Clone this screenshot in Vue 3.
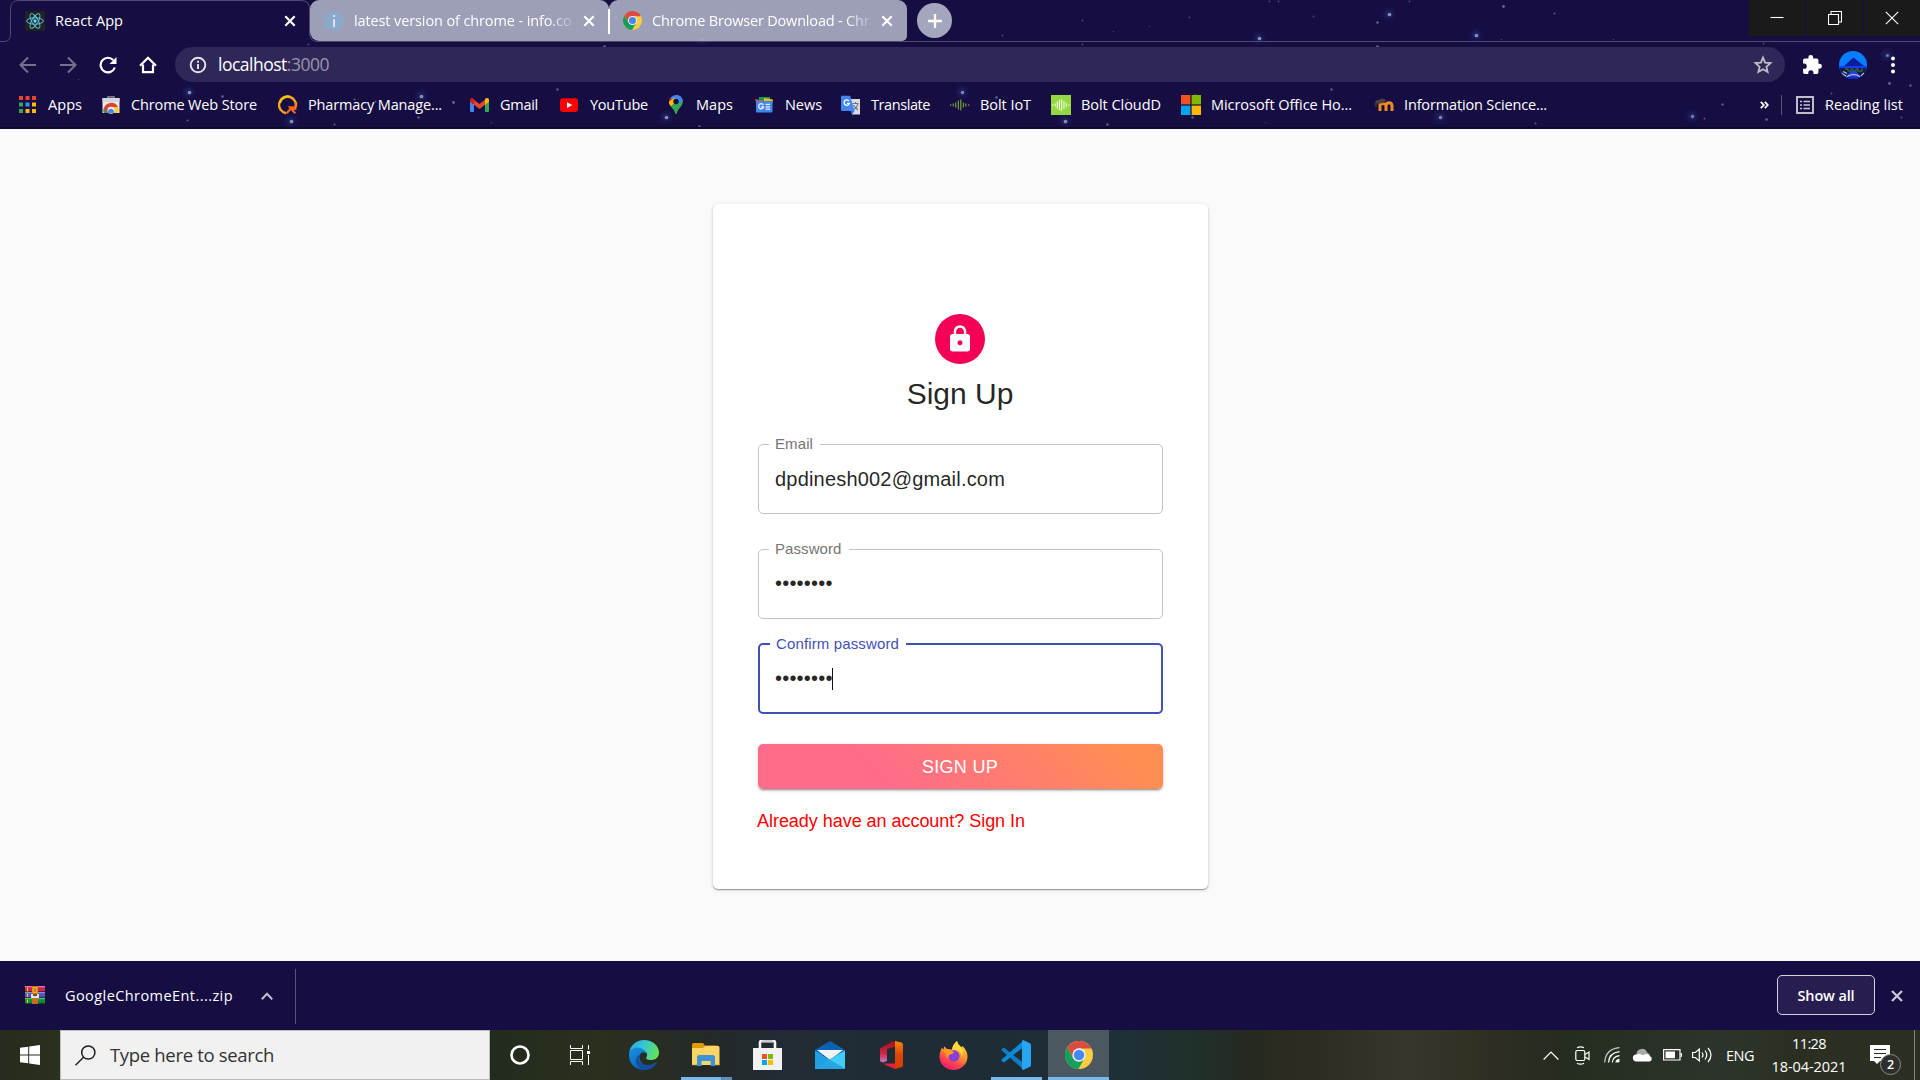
<script setup>
// Sets letter-spacing so that a label takes exactly the given width in pixels.
const vFit = {
  mounted(el, { value }) {
    const natural = el.getBoundingClientRect().width
    const count = el.textContent.length
    el.style.letterSpacing = (value - natural) / count + 'px'
  },
}

const chrome =
  '<circle cx="12" cy="12" r="12" fill="#fdcd40"/><path d="M2 5.4 7.24 14.75 12 12l4.76 2.75L11.5 24A12 12 0 0 1 2 5.4Z" fill="#169f5c"/><path d="M2 5.4A12 12 0 0 1 22.7 6.5H12V12l-4.76 2.75Z" fill="#dc4b3f"/><circle cx="12" cy="12" r="5.7" fill="#f4f4f4"/><circle cx="12" cy="12" r="4.5" fill="#4587f4"/>'

const icons = {
  chrome,
  apps:
    '<path fill="#ea4335" d="M1 1h4v4H1zM7.5 1h4v4h-4zM14 1h4v4h-4z"/><path fill="#34a853" d="M1 7.5h4v4H1z"/><path fill="#3b8cf5" d="M7.5 7.5h4v4h-4z"/><path fill="#fbbc05" d="M14 7.5h4v4h-4zM14 14h4v4h-4z"/><path fill="#34a853" d="M1 14h4v4H1z"/><path fill="#fbbc05" d="M7.5 14h4v4h-4z"/>',
  store:
    '<path d="M7 4V1.8h6V4" fill="none" stroke="#9ba0b5" stroke-width="1.3"/><path d="M1.500 3h17v15h-17z" fill="#e9eaec"/><path d="M1.500 3h17v4h-17z" fill="#d4d5da"/><path d="M2.700 14.500a7.600 7.600 0 0 1 14.300-2.500h-7L6.500 18H3a8 8 0 0 1-.3-3.500Z" fill="#dc4335"/><path d="M2.700 13 6.500 18H3a7 7 0 0 1-.3-5Z" fill="#22a35a"/><path d="M10.500 12H17a7 7 0 0 1 .3 6h-5z" fill="#fbcb3d"/><circle cx="10" cy="15.200" r="3.500" fill="#f4f4f4"/><path d="M7.400 18a2.900 2.900 0 1 1 5.200 0z" fill="#4285f4"/>',
  pharmacy:
    '<path d="M8 18.2A8.400 8.400 0 1 1 17.600 12" fill="none" stroke="#fba51d" stroke-width="2.400"/><path d="M1.800 8A8.400 8.400 0 0 1 12 1.900" fill="none" stroke="#ffc40d" stroke-width="2.400"/><path d="M17.800 7a8.400 8.400 0 0 1-1.300 7" stroke="#f58020" stroke-width="2.400" fill="none"/><path d="M10 11.200h5.500L19 14.500l-3.200.8 2.500 2.700-2 .8-3.500-3.500L9.500 19l-2-1.200 3.800-4z" fill="#f4671e"/>',
  gmail:
    '<path d="M0 4.500 4 7v10H1.200A1.200 1.200 0 0 1 0 15.800z" fill="#4285f4"/><path d="M19 4.500 15 7v10h2.800a1.200 1.200 0 0 0 1.200-1.200z" fill="#34a853"/><path d="M4 4.800 9.500 9 15 4.800v5L9.500 14 4 9.800z" fill="#ea4335"/><path d="M0 5a2 2 0 0 1 3-1.800l1 .8v5.800L0 6.800z" fill="#c5221f"/><path d="M19 5a2 2 0 0 0-3-1.800l-1 .8v5.800l4-3z" fill="#fbbc04"/>',
  youtube:
    '<rect y="3.300" width="18" height="13.600" rx="3" fill="#f00"/><path d="m7 7.200 5.300 2.900L7 13z" fill="#fff"/>',
  maps:
    '<path d="M10 0a7 7 0 0 0-5.500 2.700L8 6l6.800-4A7 7 0 0 0 10 0Z" fill="#4285f4"/><path d="M4.500 2.700A7 7 0 0 0 3.400 9L8 6z" fill="#ea4335"/><path d="m3 6.800c0 2 .8 3.400 1.900 4.800L13 4.800 8 3z" fill="#fbbc04"/><path d="M14.800 2a7 7 0 0 1 1.400 7.600C15 12.500 11.600 14.600 10.700 18.500c-.2.8-1.200.8-1.400 0-.6-2.700-2.500-4.500-4.400-6.900z" fill="#34a853"/><path d="M10 0a7 7 0 0 1 6.800 5.600L12 9z" fill="#4285f4"/><circle cx="10" cy="6.500" r="2.700" fill="#160d40"/>',
  news:
    '<path d="M4 2h11v5H4z" fill="#0c9d58"/><path d="m0 4 12 2v5H2z" fill="#dc4b3f"/><path d="m18 4.500-9-1.500v6h8z" fill="#fbbc04"/><rect x="1" y="6" width="16.500" height="11.500" rx="1" fill="#4285f4"/><path d="M8.300 10A2.500 2.500 0 1 0 8.500 12H6.300M10.500 9.400H15M10.500 11.800H15M10.500 14.200H15" fill="none" stroke="#e8efff" stroke-width="1.300"/>',
  translate:
    '<path d="M8 4h11v15.500h-8z" fill="#dadce0"/><path d="M11.500 8.500h6M14.500 7v1.500M17 8.500c-.5 3-2 4.500-4 6M12.500 10c1 2 2.500 3.500 4.500 5" stroke="#65758a" fill="none" stroke-width="1.100"/><path d="M1.200.8h8L13.500 16H1.200A1.200 1.200 0 0 1 0 14.800V2A1.200 1.200 0 0 1 1.200.8Z" fill="#4285f4"/><path d="m9.500 16 1.500 3.500 2.500-3.500z" fill="#3367d6"/><path d="M8 6a2.700 2.700 0 1 0 .4 2.300H5.800" stroke="#fff" fill="none" stroke-width="1.300"/>',
  bolt:
    '<path d="M.7 9.300v1.400M3.200 8.400v3.200M5.700 7.500v5M8.300 5.500v9M10.800 4.500v11M13.300 7.500v5M15.800 8.400v3.200M18.700 9.300v1.400" stroke="#7cab35" stroke-width="1.100"/>',
  cloud:
    '<path d="M0 0h20v20H0z" fill="#95d83f"/><path d="M1.700 9.300v1.400M4.200 8.400v3.200M6.300 6.500v7M8.500 5v10M10.700 4v12M13 6v8M15.300 8v4M18 9.300v1.400" stroke="#eefbdc" stroke-width="1.100"/>',
  ms:
    '<path d="M0 0h9.400v9.400H0z" fill="#f25022"/><path d="M10.600 0H20v9.400h-9.400z" fill="#7fba00"/><path d="M0 10.600h9.400V20H0z" fill="#00a4ef"/><path d="M10.600 10.600H20V20h-9.400z" fill="#ffb900"/>',
  moodle:
    '<path d="M6 16V8.500M12 16v-5q0-3.200 3-3.200t3 3.200v5" fill="none" stroke="#f08a24" stroke-width="3"/><path d="M7 9.500q2.500-2 5 .5" fill="none" stroke="#f08a24" stroke-width="2.500"/><path d="m1.500 6 6.500-2.500 4.500 1.500-4 3.500c-2-.8-4-.5-5 .5z" fill="#4a4340"/><path d="M2 6v6" stroke="#77504a" stroke-width=".9"/>',
}

// step: distance from this icon to the next one; width: drawn width of the label
const bookmarks = [
  { icon: 'apps', text: 'Apps', width: 34, step: 83 },
  { icon: 'store', text: 'Chrome Web Store', width: 126, step: 177 },
  { icon: 'pharmacy', text: 'Pharmacy Manage...', width: 134, step: 192 },
  { icon: 'gmail', text: 'Gmail', width: 38, step: 90 },
  { icon: 'youtube', text: 'YouTube', width: 58, step: 106 },
  { icon: 'maps', text: 'Maps', width: 37, step: 89 },
  { icon: 'news', text: 'News', width: 37, step: 86 },
  { icon: 'translate', text: 'Translate', width: 59, step: 109 },
  { icon: 'bolt', text: 'Bolt IoT', width: 51, step: 101 },
  { icon: 'cloud', text: 'Bolt CloudD', width: 80, step: 130 },
  { icon: 'ms', text: 'Microsoft Office Ho...', width: 141, step: 193 },
  { icon: 'moodle', text: 'Information Science...', width: 143, step: 180 },
]

// x, y, radius
const stars = [
  [189, 92, 2], [222, 96, 1.4], [354, 99, 1.2], [375, 101, 1.2], [421, 96, 2], [453, 102, 1.5], [418, 117, 1.3],
  [291, 121, 2], [334, 124, 1.2], [187, 120, 1.2], [308, 44, 1], [78, 79, 0.8], [730, 9, 1.2], [763, 10, 1],
  [780, 17, 1], [615, 17, 2], [604, 25, 1.3], [702, 39, 2], [604, 46, 1.4], [557, 89, 1.3], [666, 117, 2],
  [699, 126, 1.3], [491, 122, 0.8], [1269, 1, 1], [1278, 1, 1], [1409, 1, 1], [1082, 20, 1], [1149, 26, 0.8],
  [1113, 31, 0.8], [1002, 35, 1], [1189, 17, 1], [1313, 16, 1], [1377, 22, 1.4], [1389, 14, 2], [1259, 38, 2],
  [1082, 44, 1], [1377, 46, 1.4], [962, 92, 1.9], [996, 97, 1.4], [1331, 89, 1.3], [1065, 121, 2], [1107, 124, 1.3],
  [1192, 117, 1.3], [1127, 99, 1.2], [1195, 95, 1.3], [1295, 105, 1.3], [1265, 122, 0.8], [1440, 117, 1.9],
  [1503, 6, 1.5], [1554, 13, 1.2], [1476, 35, 2], [1501, 39, 0.8], [1613, 39, 0.8], [1763, 43, 1], [1887, 55, 1.7],
  [1889, 83, 1.5], [1910, 85, 1.3], [1831, 93, 1.1], [1722, 104, 1.3], [1692, 116, 1.8], [1704, 118, 1.1],
  [1535, 123, 1.2], [1766, 119, 1.4], [1901, 117, 1.1], [1461, 110, 1.3], [1826, 105, 1.5],
]

const fields = [
  { label: 'Email', labelWidth: 38, value: 'dpdinesh002@gmail.com', width: 230, cls: 'email' },
  { label: 'Password', labelWidth: 66.5, value: '••••••••', width: 57.6, cls: 'password' },
  { label: 'Confirm password', labelWidth: 123, value: '••••••••', width: 57.6, cls: 'confirm', focused: true },
]
</script>

<template>
  <div class="screen">
    <header class="browser">
      <svg class="sky" width="1920" height="127">
        <g v-for="(s, i) in stars" :key="i">
          <circle v-if="s[2] > 1.6" :cx="s[0]" :cy="s[1]" r="7" fill="#2b4ba0" opacity=".1" />
          <circle v-if="s[2] > 1.6" :cx="s[0]" :cy="s[1]" r="4" fill="#4a6ec0" opacity=".12" />
          <circle :cx="s[0] + 0.5" :cy="s[1] + 0.5" :r="s[2] * 0.92" fill="#a9add8" :opacity="s[2] * 0.38" />
        </g>
      </svg>

      <div class="tabs">
        <svg class="tab-line" width="1920" height="42">
          <path d="M0 41.500h4q6.500 0 6.500-7V9q0-8.500 8-8.500h282.500q8.500 0 8.500 8.500v24q0 8.500 8 8.500h1602.500" fill="none" stroke="#51496f" />
        </svg>
        <div class="tab active">
          <svg width="20" height="20" viewBox="0 0 20 20">
            <rect width="20" height="20" rx="1.500" fill="#222" />
            <g fill="none" stroke="#5ed0ee" stroke-width=".9">
              <ellipse cx="10" cy="10" rx="8.300" ry="3.200" />
              <ellipse cx="10" cy="10" rx="8.300" ry="3.200" transform="rotate(60 10 10)" />
              <ellipse cx="10" cy="10" rx="8.300" ry="3.200" transform="rotate(120 10 10)" />
            </g>
            <circle cx="10" cy="10" r="1.700" fill="#61dafb" />
          </svg>
          <div class="title"><span v-fit="68">React App</span></div>
          <svg class="x" width="12" height="12" viewBox="0 0 12 12"><path d="m1.300 1.300 9.400 9.400M10.700 1.300 1.300 10.700" /></svg>
        </div>
        <div class="tab idle first">
          <svg width="20" height="20" viewBox="0 0 20 20">
            <circle cx="10" cy="10" r="10" fill="#8ba9cb" />
            <path d="M9.200 8.200h1.800v8H9.200zM9.200 4h1.800v2H9.200z" fill="#e4e9f2" />
          </svg>
          <div class="title fade"><span v-fit="217.5">latest version of chrome - info.co</span></div>
          <svg class="x" width="12" height="12" viewBox="0 0 12 12"><path d="m1.300 1.300 9.400 9.400M10.700 1.300 1.300 10.700" /></svg>
        </div>
        <div class="tab idle second">
          <svg width="19" height="19" viewBox="0 0 24 24" v-html="icons.chrome"></svg>
          <div class="title fade"><span v-fit="217.5">Chrome Browser Download - Chr</span></div>
          <svg class="x" width="12" height="12" viewBox="0 0 12 12"><path d="m1.300 1.300 9.400 9.400M10.700 1.300 1.300 10.700" /></svg>
        </div>
        <div class="plus">
          <svg width="16" height="16" viewBox="0 0 16 16"><path d="M8 1v14M1 8h14" stroke="#fff" stroke-width="2.300" /></svg>
        </div>
        <div class="controls">
          <div><svg width="14" height="14" viewBox="0 0 14 14"><path d="M.5 6.500h13" /></svg></div>
          <div><svg width="14" height="14" viewBox="0 0 14 14"><path d="M.5 3.500h10v10H.5zM3 3V.5h10.500V11H11" /></svg></div>
          <div><svg width="14" height="14" viewBox="0 0 14 14"><path d="m.8.8 12.400 12.400M13.200.8.8 13.200" /></svg></div>
        </div>
      </div>

      <div class="toolbar">
        <svg class="nav dim" width="18" height="18" viewBox="0 0 18 18"><path d="M17 9H2M9 1.500 1.500 9 9 16.500" /></svg>
        <svg class="nav dim fwd" width="18" height="18" viewBox="0 0 18 18"><path d="M1 9h15M9 1.500 16.500 9 9 16.500" /></svg>
        <svg class="nav reload" width="18" height="18" viewBox="0 0 18 18"><path d="M15.800 11.500A7.300 7.300 0 1 1 14.200 4" /><path d="M17.500 1v7h-7z" fill="#fff" stroke="none" /></svg>
        <svg class="nav home" width="18" height="18" viewBox="0 0 18 18"><path d="M4 8.500v7.700h10V8.500M1 9.800 9 1.800l8 8" /></svg>
        <div class="omnibox">
          <svg width="18" height="18" viewBox="0 0 18 18">
            <circle cx="9" cy="9" r="7.300" fill="none" stroke="#e6e4ee" stroke-width="1.900" />
            <path d="M8.100 8h1.900v5H8.100zM8.100 4.800h1.900v1.900H8.100z" fill="#e6e4ee" />
          </svg>
          <div class="url" v-fit="111">localhost<i>:3000</i></div>
          <svg class="star" width="20" height="20" viewBox="0 0 20 20">
            <path d="m10 2.600 2.100 5.100 5.400.4-4.100 3.600 1.200 5.300L10 14.200l-4.600 2.800 1.200-5.300-4.100-3.600 5.400-.4z" fill="none" stroke="#c1bfc6" stroke-width="1.800" />
          </svg>
        </div>
        <svg class="puzzle" width="20" height="20" viewBox="0 0 24 24">
          <path fill="#fff" d="M21 10.500h-1.300V6.200c0-1.100-.9-2-2-2h-4.300V2.900a2.900 2.900 0 0 0-5.800 0v1.300H3.300c-1.100 0-2 .9-2 2v4.100h1.300a3.100 3.100 0 0 1 0 6.200H1.300v4.200c0 1.100.9 2 2 2h4.200v-1.300a3.100 3.100 0 0 1 6.200 0v1.300h4c1.100 0 2-.9 2-2v-4.300H21a2.950 2.950 0 0 0 0-5.900z" />
        </svg>
        <svg class="avatar-img" width="28" height="28" viewBox="0 0 28 28">
          <clipPath id="face"><circle cx="14" cy="14" r="14" /></clipPath>
          <g clip-path="url(#face)">
            <path fill="#087dff" d="M0 0h28v28H0z" />
            <path fill="#0a3ff0" d="M0 15h28v4H0z" />
            <path fill="#0b1c9e" d="m5 15 9.500-8.500L25 15z" />
            <path fill="#0e1c4e" d="M0 17h28v8H0z" />
            <path d="M6 18h3v2h3v-2h2v2h3v-2h2v2h4v-3" fill="none" stroke="#3f5c3c" stroke-width="1.300" />
            <path fill="#2446d8" d="M12 20h5l6 8H5z" />
            <path d="m2 22 5 3M4 20.500l4 2M8 25.500q7-4 13 0M25 22l-3 3" stroke="#c0c6e6" stroke-width="1.200" fill="none" />
            <path fill="#1222c4" d="M4 26h20v2H4z" />
          </g>
        </svg>
        <svg class="dots" width="6" height="18" viewBox="0 0 6 18" fill="#fff"><circle cx="3" cy="2.500" r="2" /><circle cx="3" cy="9" r="2" /><circle cx="3" cy="15.500" r="2" /></svg>
      </div>

      <div class="bookmarks">
        <div v-for="b in bookmarks" :key="b.text" class="bookmark" :style="{ width: b.step + 'px' }">
          <svg width="20" height="20" viewBox="0 0 20 20" v-html="icons[b.icon]"></svg>
          <span v-fit="b.width">{{ b.text }}</span>
        </div>
        <svg class="more" width="9" height="8" viewBox="0 0 9 8"><path d="m.8.800 3 3.200-3 3.200M4.800.800l3 3.200-3 3.200" fill="none" stroke="#fff" stroke-width="1.700" /></svg>
        <div class="rule"></div>
        <svg class="list" width="18" height="18" viewBox="0 0 18 18" stroke="#c9c7d0" fill="none">
          <rect x="1" y="1" width="16" height="16" stroke-width="1.900" />
          <path d="M4 5.500h2M7.500 5.500H14M4 9h2M7.500 9H14M4 12.500h2M7.500 12.500H14" stroke-width="1.500" />
        </svg>
        <span class="reading" v-fit="78">Reading list</span>
      </div>
    </header>

    <main class="page">
      <section class="card">
        <div class="lock">
          <svg width="30" height="30" viewBox="0 0 24 24"><path fill="#fafafa" d="M18 8h-1V6c0-2.760-2.240-5-5-5S7 3.240 7 6v2H6c-1.100 0-2 .9-2 2v10c0 1.100.9 2 2 2h12c1.100 0 2-.9 2-2V10c0-1.100-.9-2-2-2zm-6 9c-1.100 0-2-.9-2-2s.9-2 2-2 2 .9 2 2-.9 2-2 2zm3.100-9H8.900V6c0-1.710 1.390-3.100 3.100-3.100 1.710 0 3.100 1.390 3.100 3.100v2z" /></svg>
        </div>
        <h1>Sign Up</h1>
        <div v-for="f in fields" :key="f.label" class="field" :class="[f.cls, { focused: f.focused }]">
          <label><span v-fit="f.labelWidth">{{ f.label }}</span></label>
          <span class="value" v-fit="f.width">{{ f.value }}</span>
          <i v-if="f.focused" class="caret"></i>
        </div>
        <button><span v-fit="76">SIGN UP</span></button>
        <a v-fit="268">Already have an account? Sign In</a>
      </section>
    </main>

    <div class="downloads">
      <svg class="rar" width="20" height="18" viewBox="0 0 20 18">
        <path fill="#c52a4c" d="M0 0h20v6H0z" /><path fill="#e875a0" d="M0 0h20v1.300H0z" /><path fill="#7a1030" d="M0 5h20v1H0z" />
        <path fill="#5256b0" d="M0 6h20v6H0z" /><path fill="#8c8fe0" d="M0 6h20v1.200H0z" /><path fill="#2b2d70" d="M0 11h20v1H0z" />
        <path fill="#188a3c" d="M0 12h20v6H0z" /><path fill="#4ec26c" d="M0 12h20v1.200H0z" /><path fill="#0a4f1e" d="M0 16.800h20V18H0z" />
        <path d="M2.500 1.500v4M2.500 7.500v3.500M2.500 13.500V17" stroke="#f2c230" stroke-width="1.200" />
        <path fill="#c2701f" d="M7 0h6v18H7z" /><path fill="#f3b42c" d="M7.500 1h5v6h-5z" /><path d="M7 8v3h6V8" stroke="#eee" stroke-width="1.800" fill="#6d4a2a" /><path d="M8.700 3h2.600M8.700 5h2.600M10 8v2.500" stroke="#8d5414" />
      </svg>
      <span class="file" v-fit="168">GoogleChromeEnt....zip</span>
      <svg class="up" width="12" height="8" viewBox="0 0 12 8"><path d="m.8 7.200 5.200-5.400 5.200 5.400" fill="none" stroke="#c1bfca" stroke-width="2" /></svg>
      <div class="rule"></div>
      <div class="showall"><span v-fit="57">Show all</span></div>
      <svg class="close" width="12" height="12" viewBox="0 0 12 12"><path d="m1 1 10 10M11 1 1 11" stroke="#cbc9d3" stroke-width="2.200" /></svg>
    </div>

    <footer class="taskbar">
      <div class="start">
        <svg width="20" height="20" viewBox="0 0 20 20" fill="#fff"><path d="M0 2.800 8.200 1.700v7.700H0zM9.200 1.500 20 0v9.400H9.200zM0 10.500h8.200v7.800L0 17.200zM9.200 10.500H20V20L9.200 18.500z" /></svg>
      </div>
      <div class="search">
        <svg width="21" height="21" viewBox="0 0 21 21" fill="none" stroke="#1f1f1f" stroke-width="1.500"><circle cx="13.300" cy="7.500" r="6.600" /><path d="M8.500 12.200.5 20.200" /></svg>
        <span v-fit="164">Type here to search</span>
      </div>
      <div class="cell left">
        <svg width="20" height="20" viewBox="0 0 20 20"><circle cx="10" cy="10" r="8.500" fill="none" stroke="#fff" stroke-width="2.600" /></svg>
      </div>
      <div class="cell view">
        <svg width="20" height="20" viewBox="0 0 20 20" fill="none" stroke="#fff"><path d="M.5 0v3.500h12V0M.5 5.500h12v9H.5zM.5 20v-3.500h12V20M18.500 0v4.500M18.500 10v10" /><path d="M17 6h3v3h-3z" fill="#fff" stroke="none" /></svg>
      </div>
      <div class="cell">
        <svg width="30" height="30" viewBox="0 0 30 30">
          <defs>
            <linearGradient id="edgeTop" x1="0" y1=".2" x2="1" y2=".5"><stop offset="0" stop-color="#2ea7ee" /><stop offset=".5" stop-color="#36c9cf" /><stop offset="1" stop-color="#63e258" /></linearGradient>
            <linearGradient id="edgeLow" x1="0" y1="0" x2=".4" y2="1"><stop offset="0" stop-color="#1791e3" /><stop offset="1" stop-color="#0b66c2" /></linearGradient>
          </defs>
          <path d="M.3 12C1.500 5 7.500 0 15 0c8.500 0 15 6 15 12.500 0 4.800-3.500 7.500-7.500 7.500-4.500 0-5.700-1.500-5.300-2.500 1.500-2 1.500-6-2.400-6C9 9.500 3 8.500.3 12Z" fill="url(#edgeTop)" />
          <path d="M.3 12C2 8.500 6 7 10 7.700c4.500.8 7.500 4 7.500 6.500-1-2-3.300-2.800-5.200-1.200-4 3.500-1.500 11 5.700 13l-1.500 4C7 30.500 0 24 0 15.500Z" fill="url(#edgeLow)" />
          <path d="M10.500 14.500C8 20 11.500 25.200 19 25c3.500-.2 6-1.500 7.500-2.800 1-.6 1.500 0 1 .8C25 27.500 20.500 30 15.500 30 9 29 6 24 7 19.500c.5-2.500 1.800-4 3.500-5Z" fill="#124f9c" />
        </svg>
      </div>
      <div class="cell open grouped">
        <svg width="28" height="24" viewBox="0 0 28 24">
          <path d="M0 1.500Q0 0 1.500 0H11l2 2.500h12.500v4H0z" fill="#dc9a03" />
          <path d="M0 5h11l2.500-2H26q1.500 0 1.500 1.500V22H0z" fill="#ffd563" />
          <path d="M5 23v-8.500Q5 12 7.500 12h13q2.500 0 2.500 2.500V23h-4.500v-5h-9v5z" fill="#3c93d8" />
          <path d="M0 21.500h5v.8H0zM23 21.500h4.500v.8H23z" fill="#e5af36" />
        </svg>
      </div>
      <div class="cell left">
        <svg width="29" height="30" viewBox="0 0 29 30">
          <path d="M7 10V2.500Q7 1 8.500 1h12Q22 1 22 2.500V10" fill="none" stroke="#f4f4f4" stroke-width="2.600" /><path d="M9 0h11v2.500H9z" fill="#cbcbcb" />
          <path d="M0 8h29v22H0z" fill="#f1f1f1" />
          <path fill="#f25022" d="M9 14h5v5H9z" /><path fill="#7fba00" d="M15 14h5v5h-5z" /><path fill="#00a4ef" d="M9 20h5v5H9z" /><path fill="#ffb900" d="M15 20h5v5h-5z" />
        </svg>
      </div>
      <div class="cell">
        <svg width="30" height="28" viewBox="0 0 30 28">
          <path d="M0 9 15 0l15 9v5H0z" fill="#0963b5" /><path d="M2 9h26L15 19z" fill="#f2f3f5" /><path d="M0 9.500 30 28H0z" fill="#209fe2" /><path d="M30 9.500V28L14 18.500z" fill="#41cdf7" /><path d="M0 28 14 18.500 30 28z" fill="#28a4e4" />
        </svg>
      </div>
      <div class="cell">
        <svg width="24" height="28" viewBox="0 0 24 28">
          <defs><linearGradient id="officeSide" x1="0" y1="0" x2="0" y2="1"><stop offset="0" stop-color="#a30f12" /><stop offset=".6" stop-color="#c92a49" /><stop offset="1" stop-color="#c979c5" /></linearGradient><linearGradient id="officeFace" x1="0" y1="0" x2="0" y2="1"><stop offset="0" stop-color="#f58a06" /><stop offset=".5" stop-color="#dd4505" /><stop offset="1" stop-color="#d63b02" /></linearGradient></defs>
          <path d="M0 7.500 10 1.500 15.500 0v5.500L7 8v12l-4.500 1.500L0 20z" fill="url(#officeSide)" />
          <path d="M15 0 21.500 1.500Q23 2 23 4v20q0 1.800-1.500 2.200L15 28z" fill="url(#officeFace)" />
          <path d="M3.500 22.500H15V28L5.500 24z" fill="#e5203f" />
        </svg>
      </div>
      <div class="cell left">
        <svg width="29" height="29" viewBox="0 0 29 29">
          <defs><linearGradient id="fox" x1=".8" y1="0" x2=".3" y2="1"><stop offset="0" stop-color="#ffe43c" /><stop offset=".45" stop-color="#ff9130" /><stop offset=".75" stop-color="#ff3f50" /><stop offset="1" stop-color="#ee1a76" /></linearGradient></defs>
          <path d="M3 6.500 4.500 9 5.200 5.200 8 8l5 .5C13.500 5 15 2.500 18 0c.5 3 2.500 4.500 4.500 6.500l1-1.500c3 3 5 6.500 5 10.500A14 13.500 0 0 1 .5 15.500C.5 12 1.500 9 3 6.500Z" fill="url(#fox)" />
          <circle cx="14.800" cy="15" r="5.800" fill="#8a3fd3" />
          <path d="M3 9c3-1.500 6-1.500 9 1l3 1c-.5 1.800-2.500 2-4 2.500-1.200.5-2 2-1.200 4C8 16 7 15 7 13z" fill="#ff9a27" />
          <path d="M18 0c.5 3 2.500 4.500 4.500 6.500 2 2.500 1.500 6 .5 9-.5-4-3-5.500-5-6.500-1.500-.5-3.500-.5-5 0C13.500 5 15 2.500 18 0Z" fill="#ffd83a" />
        </svg>
      </div>
      <div class="cell open">
        <svg width="30" height="30" viewBox="0 0 30 30">
          <path d="M3 7.500 22.500 23v6.500L.7 10.500Q0 9.700.7 9z" fill="#0f7cc4" />
          <path d="M3 22.500 22.500 7V.5L.7 19.500q-.7.700 0 1.500z" fill="#0a8bd8" />
          <path d="M22 0 28.500 3Q30 3.700 30 5v20q0 1.300-1.500 2L22 30l-1-1V1z" fill="#26a5f2" />
        </svg>
      </div>
      <div class="cell open current">
        <svg width="28" height="28" viewBox="0 0 24 24" v-html="icons.chrome"></svg>
      </div>

      <div class="tray">
        <svg width="16" height="9" viewBox="0 0 16 9"><path d="M.6 8.500 8 1l7.400 7.500" /></svg>
        <svg class="cam" width="15" height="19" viewBox="0 0 15 19"><rect x=".8" y="4.500" width="9" height="10" rx="1.500" /><path d="m10 8.500 4-2.500v7.500l-4-2.500M2 1.800q3.500-2 7 0M2 17.200q3.500 2 7 0" /></svg>
        <svg class="wifi" width="16" height="16" viewBox="0 0 16 16"><path d="M.7 15.500Q1.500 2 15.500.7" opacity=".75" /><path d="M4.500 15.500Q5 6 15.500 4.700M8.300 15.500q.5-6 7.200-6.800" /><path d="M12 15.500q.2-2.700 3.500-3.200" /><circle cx="14" cy="14" r="1.600" fill="#fff" stroke="none" /></svg>
        <svg class="drive" width="20" height="14" viewBox="0 0 20 14"><path class="solid" d="M4.500 5.500a5.500 5.500 0 0 1 10.500-1.300L18 7 8 12z" fill="#a9aba8" /><path class="solid" d="M3.700 13.500a3.600 3.600 0 0 1-.2-7q3.500-1.500 7 .8L14 6c3 0 4 1.300 4 2.300a2.700 2.700 0 0 1-.5 5.200z" fill="#fff" /></svg>
        <svg class="battery" width="19" height="12" viewBox="0 0 19 12"><path d="M.6.600h16.400v10.400H.6z" /><path d="M2.500 2.500h9.500v6.700H2.500z" fill="#fff" stroke="none" /><path d="M18.300 4v4" /></svg>
        <svg class="speaker" width="21" height="16" viewBox="0 0 21 16"><path d="M.6 5.500h2.800L7.300 2v12L3.400 10.500H.6zM10 5.500q2 2.500 0 5M13 3.500q3.500 4.500 0 9M16 1q6 7 0 14" /></svg>
        <span class="lang" v-fit="28">ENG</span>
        <div class="clock"><span v-fit="34">11:28</span><span v-fit="75">18-04-2021</span></div>
        <div class="notice">
          <svg width="20" height="20" viewBox="0 0 20 20"><path d="M0 0h20v16H10l-3 3-3-3H0z" fill="#fff" stroke="none" /><path d="M4 4.500h12M4 8.500h12M4 12.500h7" stroke="#222a20" /></svg>
          <b>2</b>
        </div>
        <div class="peek"></div>
      </div>
    </footer>
  </div>
</template>

<style>
html,
body {
  margin: 0;
  overflow: hidden;
}
</style>

<style scoped>
* {
  box-sizing: border-box;
}
.screen {
  width: 1920px;
  height: 1080px;
  display: flex;
  flex-direction: column;
  font-family: "Open Sans", "Noto Sans", sans-serif;
  font-size: 14.5px;
  color: #fff;
}
span,
.url,
a {
  display: inline-block;
  white-space: nowrap;
}
svg {
  display: block;
  flex: none;
}

/* browser frame */
.browser {
  position: relative;
  height: 129px;
  flex: none;
  background: #160d43;
  border-bottom: 2px solid #0e0828;
  display: flex;
  flex-direction: column;
}
.sky {
  position: absolute;
  left: 0;
  top: 0;
}
.tabs {
  position: relative;
  height: 42px;
  display: flex;
  align-items: flex-start;
}
.tab-line {
  position: absolute;
  left: 0;
  top: 0;
}
.tab {
  position: relative;
  height: 41px;
  display: flex;
  align-items: center;
}
.tab.active {
  width: 299px;
  margin-left: 11px;
  padding-left: 14px;
}
.tab.idle {
  background: #a6a8bff0;
}
.tab.first {
  width: 299px;
  padding-left: 14px;
  border-radius: 9px 9px 0 9px;
}
.tab.second {
  width: 298px;
  padding-left: 14px;
  border-radius: 9px 9px 5px 0;
}
.tab.second::before {
  content: "";
  position: absolute;
  left: -1px;
  top: 9px;
  width: 1.5px;
  height: 25px;
  background: #fff;
}
.title {
  margin-left: 10px;
  width: 219px;
}
.title span {
  vertical-align: top;
}
.fade {
  -webkit-mask-image: linear-gradient(90deg, #000 88%, rgba(0, 0, 0, 0.2));
  mask-image: linear-gradient(90deg, #000 88%, rgba(0, 0, 0, 0.2));
}
.x {
  stroke: #fff;
  stroke-width: 2.2;
  margin-left: 10px;
}
.plus {
  width: 35px;
  height: 35px;
  margin: 3px 0 0 10px;
  border-radius: 50%;
  background: #a4a6bd;
  display: flex;
  align-items: center;
  justify-content: center;
}
.controls {
  margin-left: auto;
  display: flex;
  gap: 1px;
}
.controls div {
  width: 56px;
  height: 36px;
  background: #1a1a1a;
  display: flex;
  align-items: center;
  justify-content: center;
}
.controls div:nth-child(2) {
  width: 57px;
}
.controls div:last-child {
  padding-right: 1px;
}
.controls svg {
  fill: none;
  stroke: #fff;
  stroke-width: 1.1;
}

.toolbar {
  position: relative;
  height: 45px;
  display: flex;
  align-items: center;
  padding-left: 19px;
}
.nav {
  fill: none;
  stroke: #fff;
  stroke-width: 2.2;
}
.dim {
  stroke: #77718f;
  stroke-width: 2;
}
.fwd,
.reload,
.home {
  margin-left: 22px;
}
.omnibox {
  width: 1610px;
  height: 35px;
  margin-left: 18px;
  border-radius: 18px;
  background: #2f2757;
  display: flex;
  align-items: center;
  padding: 0 12px 0 14px;
}
.url {
  margin-left: 11px;
  margin-top: -2px;
  font-size: 17.5px;
}
.url i {
  font-style: normal;
  color: #9a95ac;
}
.star {
  margin-left: auto;
}
.puzzle {
  margin-left: 17px;
}
.avatar-img {
  margin-left: 17px;
}
.dots {
  margin-left: 23px;
}

.bookmarks {
  position: relative;
  height: 35px;
  display: flex;
  align-items: center;
  padding: 0 17px 0 18px;
}
.bookmark {
  display: flex;
  align-items: center;
  flex: none;
}
.bookmark span {
  margin-left: 10px;
  margin-top: -1px;
}
.more {
  margin-left: auto;
}
.bookmarks .rule {
  width: 1px;
  height: 20px;
  margin-left: 12px;
  background: #5b5478;
}
.list {
  margin-left: 14px;
}
.reading {
  margin-left: 11px;
  margin-top: -1px;
}

/* page */
.page {
  height: 832px;
  flex: none;
  background: #fafafa;
  padding-top: 75px;
  font-family: "Liberation Sans", Arial, sans-serif;
}
.card {
  width: 495px;
  height: 685px;
  margin: 0 auto 0 713px;
  padding: 110px 45px 0;
  border-radius: 5px;
  background: #fff;
  color: rgba(0, 0, 0, 0.87);
  box-shadow: 0 1px 1px rgba(0, 0, 0, 0.35), 0 1px 4px rgba(0, 0, 0, 0.14);
  display: flex;
  flex-direction: column;
}
.lock {
  width: 50px;
  height: 50px;
  margin-right: 1px;
  border-radius: 50%;
  background: #f50057;
  align-self: center;
  display: flex;
  align-items: center;
  justify-content: center;
}
h1 {
  margin: 10px 1px 0 0;
  font-size: 30px;
  font-weight: 400;
  line-height: 40px;
  text-align: center;
}
.field {
  position: relative;
  height: 70px;
  flex: none;
  border: 1px solid #c4c4c4;
  border-radius: 5px;
  padding-left: 16px;
  display: flex;
  align-items: center;
  font-size: 20px;
}
.email {
  margin-top: 30px;
}
.password {
  margin-top: 35px;
}
.password .value {
  margin-top: -1px;
}
.confirm {
  margin-top: 24px;
  height: 71px;
}
.focused {
  border: 2px solid #3f51b5;
  padding-left: 15px;
}
label {
  position: absolute;
  left: 10px;
  top: -10px;
  padding: 0 7px 0 6px;
  line-height: 18px;
  background: #fff;
  font-size: 15px;
  color: #757575;
}
.focused label {
  color: #3f51b5;
}
.caret {
  width: 1px;
  height: 22px;
  margin: 0 0 0 -1px;
  background: #111;
}
button {
  height: 45px;
  flex: none;
  margin: 30px 0 0;
  padding: 2px 1px 0 0;
  border: 0;
  border-radius: 5px;
  background: linear-gradient(45deg, #fe6b8b 30%, #ff8e53 90%);
  box-shadow: 0 3px 1px -2px rgba(0, 0, 0, 0.2), 0 2px 2px rgba(0, 0, 0, 0.14), 0 1px 5px rgba(0, 0, 0, 0.12);
  color: #fff;
  font: 18px "Liberation Sans", Arial, sans-serif;
}
a {
  align-self: flex-start;
  margin: 19px 0 0 -1px;
  font-size: 18px;
  line-height: 26px;
  color: #f00;
}

/* download shelf */
.downloads {
  height: 69px;
  flex: none;
  background: #160d43;
  display: flex;
  align-items: center;
  padding: 0 17px 0 25px;
}
.rar {
  margin-top: -1px;
}
.file {
  margin-left: 20px;
}
.up {
  margin-left: 28px;
}
.downloads .rule {
  width: 1px;
  height: 55px;
  margin-left: 22px;
  margin-top: 1px;
  background: #5b5478;
}
.showall {
  width: 98px;
  height: 40px;
  margin-left: auto;
  margin-top: -1px;
  border: 1px solid #d6d3e0;
  border-radius: 5px;
  background: #271d50;
  display: flex;
  align-items: center;
  justify-content: center;
  font-weight: 600;
}
.close {
  margin-left: 16px;
}

/* taskbar */
.taskbar {
  height: 50px;
  flex: none;
  display: flex;
  background: linear-gradient(90deg, #252c1d 0, #2b3120 60px, #232b1d 490px, #2a301e 600px, #24292a 720px, #212c35 800px, #1e2c35 1000px, #1f3037 1130px, #20302b 1190px, #262921 1250px, #2e2c20 1310px, #38352a 1410px, #2e2f22 1490px, #252c1f 1560px, #2c342b 1720px, #2b2f21 1800px, #2a3022 1920px);
}
.start {
  width: 60px;
  display: flex;
  align-items: center;
  justify-content: center;
}
.search {
  width: 430px;
  height: 50px;
  border: 1px solid #bcbcbc;
  background: #f1f1f1;
  color: #333;
  display: flex;
  align-items: center;
  padding-left: 14px;
  font-size: 18.5px;
}
.search span {
  margin-left: 14px;
  margin-top: -1px;
}
.cell {
  position: relative;
  width: 62px;
  display: flex;
  align-items: center;
  justify-content: center;
}
.search + .cell {
  width: 61px;
}
.left {
  padding-right: 1px;
}
.view {
  padding-right: 4px;
}
.open::after {
  content: "";
  position: absolute;
  left: 6px;
  right: 5px;
  bottom: 0;
  height: 3px;
  background: #76b9ed;
}
.grouped::after {
  background: linear-gradient(90deg, #76b9ed 40px, #456788 40px, #5d8fbd 41px);
}
.cell.current {
  width: 61px;
  margin-left: 1px;
  background: #4c585f;
}
.current::after {
  left: 0;
  right: 0;
}
.tray {
  margin-left: auto;
  display: flex;
  align-items: center;
}
.tray svg {
  fill: none;
  stroke: #fff;
  stroke-width: 1.2;
}
.tray .solid {
  stroke: none;
}
.cam {
  margin-left: 16px;
}
.wifi {
  margin-left: 14px;
}
.drive {
  margin-left: 12px;
}
.battery {
  margin-left: 11px;
}
.speaker {
  margin-left: 10px;
}
.lang {
  margin-left: 13px;
}
.clock {
  width: 76px;
  margin-left: 17px;
  display: flex;
  flex-direction: column;
  align-items: center;
  line-height: 23px;
}
.notice {
  position: relative;
  margin-left: 23px;
}
.notice b {
  position: absolute;
  left: 10px;
  top: 9px;
  width: 21px;
  height: 21px;
  border: 1px solid #8a8e86;
  border-radius: 50%;
  background: #2c2f2b;
  font-size: 12.5px;
  font-weight: 600;
  line-height: 19px;
  text-align: center;
}
.peek {
  width: 1px;
  height: 50px;
  margin: 0 5px 0 24px;
  background: #83877c;
}
</style>
